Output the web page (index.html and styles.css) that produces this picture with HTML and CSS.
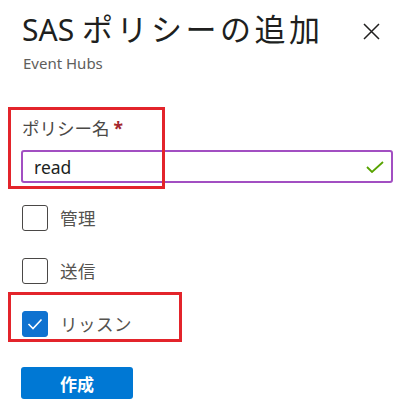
FILE: index.html
```html
<!DOCTYPE html>
<html lang="ja">
<head>
<meta charset="utf-8">
<link rel="stylesheet" href="styles.css">
</head>
<body>
<div class="panel">
  <div class="head">
    <h1 class="title">SAS <span class="jp">ポリシーの追加</span></h1>
    <button class="close" aria-label="閉じる">
      <svg width="17" height="17" viewBox="0 0 17 17"><path d="M1 1 L16 16 M16 1 L1 16" stroke="#201f1e" stroke-width="1.5" fill="none"/></svg>
    </button>
  </div>
  <div class="subtitle">Event Hubs</div>

  <div class="field">
    <label class="label">ポリシー名<span class="req">*</span></label>
    <div class="input">
      <span class="value">read</span>
      <svg class="ok" width="18" height="12" viewBox="0 0 18 12"><path d="M1 6 L6 11 L17 1" stroke="#57a300" stroke-width="1.8" fill="none"/></svg>
    </div>
    <div class="mark mark-name"></div>
  </div>

  <div class="checks">
    <div class="check"><span class="box"></span><span class="ctext">管理</span></div>
    <div class="check"><span class="box"></span><span class="ctext">送信</span></div>
    <div class="check"><span class="box on"><svg width="16" height="12" viewBox="0 0 16 12"><path d="M1.5 6 L6 10.5 L14.5 1.5" stroke="#fff" stroke-width="1.6" fill="none"/></svg></span><span class="ctext">リッスン</span>
      <div class="mark mark-listen"></div>
    </div>
  </div>

  <button class="primary">作成</button>
</div>
</body>
</html>
```

FILE: styles.css
```css
* { box-sizing: border-box; }
html, body { margin: 0; padding: 0; background: #fff; }
body {
  font-family: "Segoe UI", "Noto Sans", "Noto Sans CJK JP", sans-serif;
  color: #323130;
}
.panel {
  padding: 10px 22px 0 21px;
  width: 415px;
}
.head {
  display: flex;
  align-items: flex-start;
  justify-content: space-between;
  height: 40px;
}
.title {
  margin: 0;
  font-size: 30px;
  line-height: 40px;
  height: 40px;
  font-weight: 400;
  color: #201f1e;
  padding-left: 1px;
  white-space: nowrap;
  flex: none;
}
.jp {
  font-family: "Noto Sans CJK JP", sans-serif;
  font-size: 31px;
  line-height: 1;
  letter-spacing: 3.5px;
}
.close {
  border: 0;
  background: none;
  padding: 0;
  margin: 13px 13px 0 0;
  width: 17px;
  height: 17px;
  display: block;
  flex: none;
}
.close svg { display: block; }
.subtitle {
  margin-top: 3px;
  font-size: 15px;
  line-height: 20px;
  color: #605e5c;
  padding-left: 2px;
}
.field {
  position: relative;
  margin-top: 43px;
}
.label {
  display: block;
  font-size: 17.5px;
  line-height: 24px;
  color: #4a4846;
  padding-left: 1px;
}
.req {
  color: #a4262c;
  font-weight: 700;
  margin-left: 4px;
}
.input {
  margin-top: 10px;
  height: 33px;
  border: 2px solid #a24fc2;
  border-radius: 3px;
  display: flex;
  align-items: center;
  justify-content: space-between;
  padding: 0 7px 0 11px;
}
.value {
  font-size: 17.5px;
  color: #201f1e;
}
.ok { display: block; }
.mark {
  position: absolute;
  border: 3px solid #e3242b;
  pointer-events: none;
}
.mark-name {
  left: -13px;
  top: -9px;
  width: 157px;
  height: 82px;
}
.checks {
  margin-top: 22px;
  display: flex;
  flex-direction: column;
  gap: 27px;
  padding-left: 1px;
}
.check {
  position: relative;
  display: flex;
  align-items: center;
  height: 26px;
}
.box {
  width: 26px;
  height: 26px;
  border: 1.5px solid #4a4846;
  border-radius: 3px;
  display: flex;
  align-items: center;
  justify-content: center;
  flex: none;
}
.box.on {
  background: #0f72d0;
  border-color: #0f72d0;
}
.box svg { display: block; }
.ctext {
  margin-left: 12px;
  font-size: 17.5px;
  line-height: 24px;
  color: #55534f;
  letter-spacing: 0.5px;
}
.mark-listen {
  left: -14px;
  top: -19px;
  width: 174px;
  height: 50px;
}
.primary {
  margin-top: 30px;
  width: 112px;
  height: 32px;
  border: 0;
  border-radius: 3px;
  background: #0078d4;
  color: #fff;
  font-family: "Noto Sans CJK JP", sans-serif;
  font-size: 17px;
  font-weight: 700;
  display: block;
  padding: 0;
}
```
